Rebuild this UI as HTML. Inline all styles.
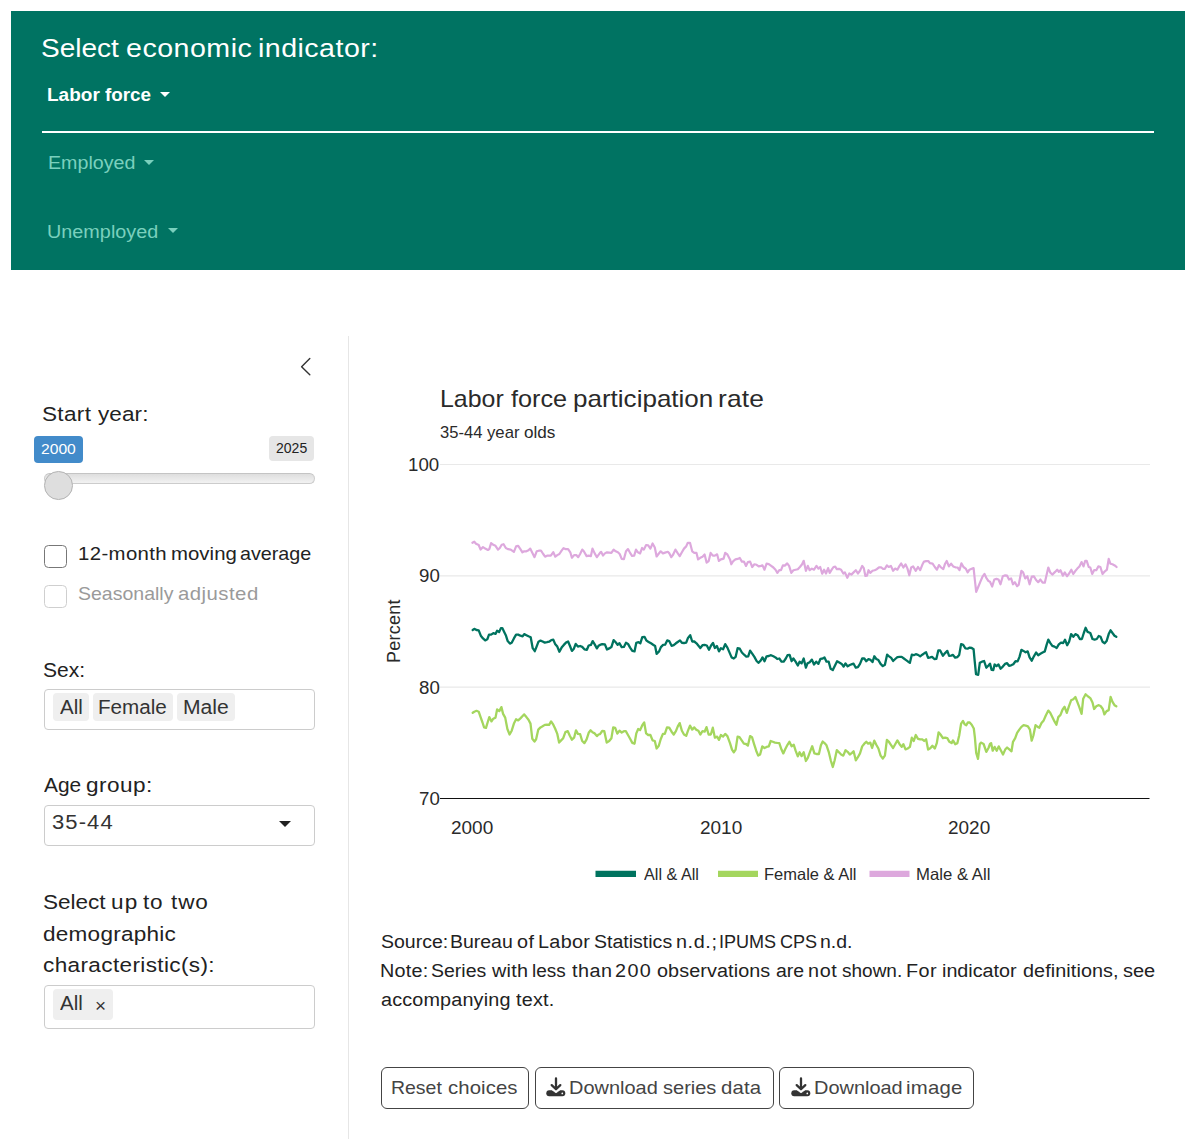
<!DOCTYPE html>
<html lang="en"><head><meta charset="utf-8"><title>Economic indicators</title>
<style>
html,body{margin:0;padding:0;background:#fff}
body{width:1199px;height:1139px;position:relative;overflow:hidden;font-family:'Liberation Sans', sans-serif}
.t{position:absolute;white-space:pre;font-family:'Liberation Sans', sans-serif;transform-origin:0 0}
.abs{position:absolute;box-sizing:border-box}
.hdr{left:11px;top:11px;width:1174px;height:259px;background:#007362}
.rule{left:42px;top:130.5px;width:1112px;height:2px;background:#fff}
.caret{width:0;height:0;border-left:5px solid transparent;border-right:5px solid transparent;border-top:5.5px solid #fff}
.box{border:1px solid #ccc;border-radius:4px;background:#fff}
.chip{background:#efefef;border-radius:4px}
.btn{border:1px solid #444;border-radius:6px;background:#fff}
.cb{width:23px;height:23px;border-radius:4.5px;background:#fff}
</style></head><body>
<div class="abs hdr"></div>
<div class="abs rule"></div>
<div class="abs caret" style="left:160px;top:92px"></div>
<div class="abs caret" style="left:144px;top:160px;border-top-color:#7ad0bd"></div>
<div class="abs caret" style="left:168.3px;top:228.3px;border-top-color:#7ad0bd"></div>

<!-- sidebar -->
<div class="abs" style="left:348px;top:336px;width:1px;height:803px;background:#e6e6e6"></div>
<svg class="abs" style="left:298px;top:355px" width="16" height="24" viewBox="0 0 16 24"><path d="M11.8 3.6 L3.6 11.7 L11.8 19.8" fill="none" stroke="#333" stroke-width="1.4" stroke-linecap="round" stroke-linejoin="round"/></svg>
<div class="abs" style="left:34px;top:436px;width:48.8px;height:26.8px;border-radius:4px;background:#428bca"></div>
<div class="abs" style="left:269.3px;top:436.3px;width:45px;height:25.2px;border-radius:4px;background:#e6e6e6"></div>
<div class="abs" style="left:44px;top:473px;width:271px;height:10.8px;border-radius:6px;border:1px solid #ccc;border-top-color:#c4c4c4;background:linear-gradient(#dedede,#f2f2f2)"></div>
<div class="abs" style="left:44px;top:471px;width:28.8px;height:28.8px;border-radius:50%;border:1px solid #b3b3b3;background:#dedede"></div>
<div class="abs cb" style="left:43.8px;top:544.5px;border:1px solid #777"></div>
<div class="abs cb" style="left:43.8px;top:584.5px;border:1px solid #cfcfcf"></div>
<div class="abs box" style="left:44px;top:689px;width:271px;height:41px"></div>
<div class="abs chip" style="left:53px;top:693px;width:35.8px;height:28.3px"></div>
<div class="abs chip" style="left:93px;top:693px;width:79.5px;height:28.3px"></div>
<div class="abs chip" style="left:177px;top:693px;width:57.5px;height:28.3px"></div>
<div class="abs box" style="left:44px;top:805px;width:271px;height:41px"></div>
<div class="abs caret" style="left:278.7px;top:821.3px;border-left-width:6px;border-right-width:6px;border-top:6px solid #222"></div>
<div class="abs box" style="left:44px;top:985px;width:271px;height:44px"></div>
<div class="abs chip" style="left:53px;top:989px;width:59.8px;height:31px"></div>

<!-- buttons -->
<div class="abs btn" style="left:381px;top:1067px;width:147.5px;height:42px"></div>
<div class="abs btn" style="left:535px;top:1067px;width:238.6px;height:42px"></div>
<div class="abs btn" style="left:779px;top:1067px;width:195px;height:42px"></div>
<svg class="abs" style="left:546px;top:1076px" width="20" height="21" viewBox="0 0 20 21"><use href="#dl"/></svg>
<svg class="abs" style="left:790.6px;top:1076px" width="20" height="21" viewBox="0 0 20 21"><use href="#dl"/></svg>
<svg width="0" height="0" style="position:absolute"><defs><g id="dl"><rect x="0.3" y="14.3" width="19" height="5.9" rx="2.9" fill="#333"/><path d="M6.1 14 L10 16.9 L13.9 14 Z" fill="#fff" stroke="#fff" stroke-width="0.6"/><circle cx="16.3" cy="17.4" r="0.85" fill="#fff"/><path d="M10 2.4 V13 M5.7 9.1 L10 13.3 L14.3 9.1" fill="none" stroke="#333" stroke-width="2.3" stroke-linecap="round" stroke-linejoin="round"/></g></defs></svg>

<svg class="abs" style="left:0;top:0" width="1199" height="1139" viewBox="0 0 1199 1139">
<line x1="440" x2="1150" y1="464.5" y2="464.5" stroke="#e9e9e9" stroke-width="1.1"/>
<line x1="440" x2="1150" y1="575.83" y2="575.83" stroke="#e9e9e9" stroke-width="1.1"/>
<line x1="440" x2="1150" y1="687.17" y2="687.17" stroke="#e9e9e9" stroke-width="1.1"/>
<line x1="440" x2="1149.5" y1="798.5" y2="798.5" stroke="#111" stroke-width="1"/>
<path d="M472.4 542.8 L474.3 541.7 L476.0 543.7 L478.7 545.0 L480.6 549.6 L483.0 547.1 L485.2 548.6 L487.9 550.0 L489.3 549.1 L491.1 543.1 L493.3 544.8 L495.5 545.8 L498.0 549.6 L499.8 548.0 L501.7 544.8 L503.6 544.2 L505.8 548.0 L507.9 549.1 L510.7 549.6 L513.9 551.8 L516.1 546.4 L518.2 545.8 L520.4 549.1 L522.4 552.3 L524.2 551.3 L526.4 551.3 L528.5 550.2 L530.2 548.6 L531.8 551.8 L534.5 557.2 L536.7 551.3 L538.8 550.7 L541.0 550.7 L543.2 554.0 L545.1 556.7 L547.5 555.6 L550.8 555.6 L553.3 552.1 L555.3 556.7 L557.3 555.1 L559.4 554.0 L561.6 550.7 L563.5 548.2 L565.4 549.1 L568.1 549.1 L570.3 552.3 L571.9 557.8 L574.1 555.1 L576.3 555.1 L578.2 557.2 L580.1 554.0 L582.2 549.6 L583.8 551.3 L586.6 556.1 L588.7 555.6 L590.9 556.1 L592.5 548.6 L594.7 553.4 L596.9 557.2 L600.0 552.9 L601.1 551.8 L603.0 555.6 L604.9 553.4 L607.0 552.3 L609.2 552.6 L611.4 552.9 L613.6 549.6 L615.7 551.3 L617.9 552.3 L619.7 554.0 L621.7 558.9 L623.9 559.1 L626.0 551.3 L628.0 549.1 L629.8 552.3 L632.0 555.8 L634.2 555.6 L636.0 549.6 L637.9 552.3 L640.1 553.4 L642.1 548.0 L643.9 549.6 L646.1 545.0 L648.2 545.3 L650.4 548.6 L652.6 543.5 L654.8 547.5 L656.6 556.5 L658.5 554.0 L660.7 551.3 L662.9 553.4 L665.1 552.6 L667.8 551.8 L669.4 553.4 L671.3 557.2 L673.2 554.5 L675.4 549.6 L677.5 552.9 L679.7 556.1 L681.9 552.3 L684.0 548.6 L686.2 546.4 L687.8 542.8 L690.0 542.8 L692.2 551.3 L694.3 552.9 L696.5 552.9 L698.1 559.4 L700.3 557.8 L702.5 556.7 L704.6 554.5 L706.6 562.6 L708.7 561.0 L710.6 552.9 L712.8 555.6 L714.9 555.6 L717.1 554.3 L718.9 561.0 L720.9 559.4 L723.6 558.6 L725.2 552.9 L727.4 554.5 L730.0 559.4 L731.3 564.3 L733.3 561.0 L735.4 559.4 L737.6 558.9 L739.8 558.0 L741.9 561.6 L743.9 561.6 L746.0 565.9 L747.9 562.1 L750.1 561.6 L752.2 567.0 L754.4 564.3 L756.6 564.8 L758.7 566.4 L760.9 565.9 L762.5 565.4 L764.5 569.7 L766.6 563.7 L768.8 564.1 L771.2 565.9 L773.4 567.5 L775.5 569.7 L777.4 572.9 L779.3 570.2 L781.0 570.2 L782.9 565.4 L784.8 565.6 L787.2 563.4 L789.1 565.9 L791.3 572.9 L793.4 570.2 L795.6 569.7 L797.8 569.2 L799.9 567.0 L802.1 564.3 L803.7 560.8 L805.9 570.8 L807.8 565.9 L809.7 570.2 L811.9 568.6 L814.0 569.7 L816.5 565.9 L818.4 568.6 L820.2 567.0 L822.2 573.8 L824.1 569.7 L826.0 573.5 L828.1 568.1 L829.7 572.9 L831.7 569.7 L833.5 567.0 L835.2 566.7 L836.8 569.2 L839.0 568.8 L841.1 569.7 L843.3 573.5 L844.9 572.4 L847.3 577.8 L849.3 573.5 L851.4 574.6 L853.6 572.4 L855.8 570.2 L857.9 573.5 L860.0 570.8 L862.2 565.9 L863.8 568.1 L865.4 576.0 L867.0 575.7 L868.5 570.2 L870.3 572.9 L872.5 570.8 L874.6 570.2 L876.8 569.2 L879.0 567.3 L881.1 567.3 L882.8 568.8 L884.9 568.8 L886.9 565.4 L888.7 567.0 L890.9 565.9 L893.1 570.8 L895.2 568.6 L897.4 569.7 L899.2 566.4 L901.2 563.4 L903.4 567.5 L905.5 564.3 L907.5 568.6 L909.3 575.3 L911.2 567.5 L913.1 566.4 L915.8 570.8 L918.0 567.0 L920.2 570.2 L922.3 564.8 L924.0 561.6 L926.1 561.2 L928.3 561.0 L929.9 563.2 L932.6 563.7 L934.8 567.0 L937.0 569.7 L938.9 565.1 L941.1 567.5 L943.3 569.2 L945.1 563.7 L946.7 561.0 L948.9 566.4 L951.1 563.7 L953.2 566.4 L955.4 567.3 L957.6 567.5 L959.5 570.2 L961.4 563.4 L963.5 567.0 L965.7 568.6 L967.7 572.4 L969.5 569.7 L971.7 568.8 L973.6 568.1 L974.9 580.5 L976.2 591.9 L978.2 587.0 L980.4 581.6 L982.5 576.7 L984.5 574.0 L986.3 577.8 L988.5 581.1 L990.0 581.8 L992.2 586.5 L994.3 579.5 L996.5 578.9 L998.5 579.5 L1000.5 584.3 L1002.8 576.2 L1005.2 575.3 L1007.1 575.7 L1009.0 579.5 L1011.1 578.4 L1013.0 584.3 L1014.9 582.2 L1017.1 586.2 L1018.7 584.9 L1021.4 570.8 L1023.1 572.4 L1025.2 578.4 L1027.4 576.2 L1029.6 584.3 L1031.7 576.7 L1033.9 576.4 L1036.1 580.0 L1038.2 582.2 L1040.4 579.5 L1042.6 582.7 L1044.8 582.7 L1046.4 575.7 L1048.3 567.5 L1050.2 572.4 L1052.3 574.6 L1055.1 571.9 L1057.2 569.7 L1058.8 571.9 L1060.5 570.2 L1062.9 575.7 L1064.8 572.4 L1067.0 576.2 L1069.1 573.5 L1071.3 569.7 L1073.3 574.0 L1075.1 571.3 L1077.3 568.6 L1079.4 566.4 L1081.6 562.1 L1083.5 566.4 L1085.2 560.8 L1086.7 560.8 L1088.7 567.0 L1090.3 567.5 L1092.2 574.0 L1094.1 570.2 L1096.3 570.2 L1098.4 566.4 L1100.4 567.0 L1102.5 574.0 L1104.9 571.3 L1106.9 569.7 L1108.7 558.9 L1110.4 563.7 L1112.5 564.3 L1114.7 565.4 L1116.6 567.0" fill="none" stroke="#dda8dd" stroke-width="2.2" stroke-linejoin="round" stroke-linecap="round"/>
<path d="M472.7 712.8 L474.3 711.7 L476.5 710.8 L478.7 711.7 L480.6 717.1 L482.5 722.5 L484.1 727.4 L486.0 727.9 L487.6 722.5 L489.3 717.1 L491.5 721.4 L493.3 718.7 L495.5 717.6 L497.1 709.5 L499.3 711.1 L501.4 707.1 L503.1 713.9 L505.2 717.6 L507.4 729.0 L509.6 734.5 L511.7 730.7 L513.9 723.6 L516.1 719.3 L518.2 720.4 L520.4 718.4 L522.6 716.0 L524.2 714.4 L526.4 717.1 L528.5 719.8 L530.5 723.6 L532.3 738.8 L534.5 741.5 L536.1 739.3 L538.3 729.6 L540.5 727.4 L542.6 726.3 L544.8 724.9 L547.0 724.7 L549.1 724.9 L551.1 721.4 L553.3 724.7 L555.1 728.5 L557.3 733.9 L559.1 742.6 L561.1 740.4 L563.2 738.2 L565.4 732.1 L567.8 731.2 L569.7 735.5 L571.9 739.7 L574.1 737.7 L576.0 730.3 L577.9 733.9 L580.1 734.2 L582.2 741.0 L584.4 743.1 L586.6 739.3 L588.7 732.8 L590.6 730.3 L592.5 732.3 L594.7 733.4 L596.9 736.1 L598.5 734.5 L600.0 734.1 L602.2 731.0 L604.3 731.2 L606.7 742.6 L609.2 741.0 L611.4 738.2 L613.2 727.4 L615.2 727.9 L617.3 733.6 L619.5 730.7 L621.7 732.5 L623.9 731.2 L625.8 731.2 L628.0 735.0 L630.1 738.8 L632.3 742.9 L634.5 743.7 L636.3 733.4 L638.2 729.0 L640.1 730.1 L642.3 725.2 L644.2 722.5 L646.1 733.4 L648.2 735.0 L650.4 735.0 L652.6 740.4 L654.8 741.0 L656.6 748.5 L658.8 745.8 L660.7 739.3 L662.9 733.9 L664.8 733.9 L667.0 727.4 L669.2 727.7 L671.6 731.7 L673.7 734.5 L675.9 731.2 L677.8 726.3 L679.7 723.1 L681.9 730.7 L684.0 734.5 L686.2 735.8 L688.0 730.7 L690.0 725.6 L692.2 729.6 L694.3 727.4 L696.5 729.9 L698.4 730.7 L700.3 734.5 L702.5 731.2 L704.6 731.7 L706.5 727.1 L708.6 734.5 L710.8 734.5 L712.8 727.7 L714.9 737.7 L717.1 736.6 L719.0 739.9 L720.9 735.0 L723.1 736.6 L725.2 733.9 L727.4 736.1 L730.0 743.1 L732.0 749.6 L733.8 752.3 L735.6 749.6 L737.6 736.6 L739.5 737.2 L741.7 740.4 L743.9 743.7 L746.0 744.0 L747.9 745.5 L750.1 736.1 L752.0 737.2 L754.1 744.2 L756.2 750.7 L758.2 755.6 L760.1 754.5 L762.3 746.4 L764.5 748.0 L766.6 746.9 L768.8 746.4 L770.7 741.0 L772.8 741.8 L775.0 742.6 L777.2 742.9 L779.3 743.1 L781.5 749.6 L783.3 753.4 L785.3 749.1 L787.5 744.8 L789.4 741.8 L791.6 746.2 L793.8 744.8 L795.6 750.7 L797.8 756.4 L799.6 752.3 L801.6 756.1 L803.7 752.3 L805.9 761.0 L807.8 757.8 L810.0 751.8 L812.2 746.2 L814.4 753.4 L816.5 754.0 L818.9 754.0 L820.9 745.3 L822.7 741.5 L824.5 743.1 L826.5 745.3 L828.7 751.8 L830.8 760.5 L832.8 767.0 L834.6 760.5 L836.8 750.2 L839.0 752.3 L841.1 754.5 L843.3 755.6 L845.5 750.2 L847.6 751.8 L849.8 754.5 L852.0 752.9 L853.6 751.3 L855.8 760.3 L857.9 757.2 L860.0 753.4 L862.2 746.4 L864.3 743.7 L866.3 741.8 L868.1 743.7 L870.3 742.6 L872.1 748.0 L874.3 740.7 L876.3 744.8 L878.4 748.5 L880.6 755.6 L882.8 758.5 L884.9 755.6 L886.9 739.9 L888.7 741.5 L890.9 744.8 L893.1 748.0 L895.2 744.2 L897.4 740.4 L899.6 744.2 L901.7 746.9 L903.4 744.2 L905.5 749.4 L907.7 748.5 L909.9 746.9 L911.8 737.7 L913.7 741.0 L915.8 735.0 L918.0 738.8 L920.2 739.3 L922.3 739.3 L924.2 741.0 L926.1 739.3 L928.1 749.6 L930.3 748.3 L932.4 745.8 L934.8 748.5 L936.8 743.1 L938.6 732.3 L940.5 734.5 L942.9 738.2 L945.1 737.7 L947.3 738.2 L949.4 741.8 L951.6 743.1 L953.0 740.4 L955.2 744.2 L957.4 743.1 L959.2 735.5 L961.1 723.6 L963.0 720.9 L964.6 724.2 L966.3 725.2 L967.9 722.3 L969.7 722.5 L971.7 724.7 L973.8 728.5 L974.9 737.7 L976.2 752.9 L978.0 758.8 L979.8 744.2 L980.9 742.6 L983.6 744.0 L986.3 751.8 L988.5 748.0 L990.0 744.0 L991.1 743.1 L992.7 750.7 L994.6 746.9 L996.7 750.7 L998.7 746.4 L1000.8 750.2 L1003.0 754.5 L1005.2 749.6 L1007.1 747.5 L1009.3 749.4 L1011.5 751.3 L1013.0 741.8 L1015.2 738.2 L1017.1 732.8 L1019.3 729.6 L1021.4 726.9 L1023.6 725.2 L1025.8 725.6 L1027.9 726.3 L1029.9 729.6 L1031.7 740.7 L1033.4 735.5 L1035.5 725.2 L1037.7 726.9 L1039.3 727.7 L1041.5 723.1 L1043.7 720.4 L1045.8 715.5 L1048.3 710.6 L1050.2 712.8 L1052.3 717.1 L1054.5 721.4 L1056.4 724.7 L1058.3 717.1 L1060.5 714.9 L1062.6 709.5 L1064.6 706.8 L1066.8 712.8 L1068.9 706.3 L1071.1 700.3 L1073.3 699.2 L1075.4 697.0 L1077.3 701.9 L1079.4 707.3 L1081.6 713.9 L1083.2 698.7 L1085.6 694.3 L1088.1 696.5 L1090.3 698.1 L1092.5 702.5 L1094.1 709.0 L1096.3 706.3 L1098.4 705.2 L1100.6 706.0 L1102.8 709.0 L1104.4 714.4 L1106.6 711.1 L1108.7 710.1 L1110.6 697.0 L1112.5 701.9 L1114.5 705.2 L1116.3 706.3" fill="none" stroke="#a4d65e" stroke-width="2.3" stroke-linejoin="round" stroke-linecap="round"/>
<path d="M472.7 630.0 L474.3 628.9 L476.5 630.0 L478.7 630.3 L480.8 635.7 L483.0 638.4 L485.2 640.4 L487.3 639.3 L489.0 634.6 L491.1 634.6 L493.3 633.2 L495.5 633.9 L497.1 630.8 L499.1 632.1 L500.9 628.1 L502.3 628.1 L504.2 631.9 L505.8 635.2 L507.7 641.1 L509.9 643.6 L511.7 642.8 L513.9 638.4 L516.1 634.6 L518.2 634.6 L520.4 635.7 L522.6 636.3 L524.2 634.1 L526.4 635.2 L528.5 636.3 L530.7 637.3 L532.7 648.2 L534.8 651.2 L536.4 647.1 L538.5 641.7 L540.5 640.6 L542.6 641.5 L544.8 642.6 L547.0 642.2 L549.1 641.7 L551.3 640.1 L553.3 639.7 L555.1 643.9 L557.3 646.6 L559.4 651.7 L561.6 647.6 L563.8 644.9 L566.0 642.6 L568.1 641.5 L570.0 646.0 L571.9 650.9 L573.9 648.7 L575.7 643.9 L577.9 646.6 L580.1 646.0 L582.2 646.9 L584.4 649.3 L586.9 649.8 L588.7 645.5 L590.9 644.9 L592.7 641.1 L594.7 644.4 L596.9 648.4 L598.5 645.8 L600.0 644.9 L602.2 644.1 L604.9 644.4 L607.0 649.5 L609.2 648.4 L611.4 647.1 L613.6 640.1 L615.7 642.2 L617.6 644.7 L619.5 643.3 L621.7 647.1 L623.9 646.9 L626.0 642.8 L628.0 643.9 L630.1 647.6 L632.3 650.9 L634.5 651.4 L636.3 642.8 L638.5 642.2 L640.3 643.3 L642.3 637.1 L644.5 636.8 L646.4 640.6 L648.6 641.9 L651.0 643.3 L653.1 644.7 L655.1 646.0 L656.6 653.8 L659.1 651.4 L660.9 647.1 L663.1 644.9 L665.1 644.7 L667.2 640.4 L669.2 641.1 L671.6 645.8 L673.7 645.2 L675.9 643.3 L678.1 641.7 L680.0 640.4 L681.9 642.8 L684.0 643.0 L686.2 642.6 L688.0 637.9 L690.2 635.2 L692.2 641.5 L694.3 641.5 L696.5 643.3 L698.7 646.0 L700.3 648.0 L702.5 645.2 L704.6 644.9 L706.8 645.5 L709.0 649.8 L711.1 645.5 L713.0 643.0 L714.9 648.0 L716.9 646.0 L719.0 651.4 L720.9 648.2 L723.1 649.3 L725.2 644.1 L727.4 647.6 L730.0 653.6 L731.6 657.4 L733.8 658.5 L735.6 656.9 L737.6 648.2 L739.8 648.7 L741.9 652.5 L744.1 654.7 L746.3 656.6 L748.2 656.3 L750.1 650.6 L752.2 653.6 L754.4 656.9 L756.6 661.0 L758.4 662.8 L760.6 660.7 L762.5 657.4 L764.5 661.2 L766.6 656.3 L768.8 656.0 L771.0 655.2 L773.4 656.3 L775.5 657.4 L777.2 659.0 L779.3 658.5 L781.5 661.7 L783.7 661.7 L785.8 658.5 L787.5 655.2 L789.6 654.9 L791.6 661.2 L793.4 658.5 L795.6 661.7 L797.8 665.5 L799.6 661.7 L801.6 663.4 L803.7 658.5 L805.9 667.7 L807.5 663.4 L809.7 662.3 L811.9 659.6 L814.0 664.5 L816.2 661.7 L818.4 663.9 L820.5 658.8 L822.7 658.5 L824.5 657.4 L826.5 661.7 L828.7 661.7 L830.6 668.8 L832.8 670.1 L835.0 665.5 L837.1 661.2 L839.3 662.5 L841.7 663.9 L843.6 666.6 L845.5 663.4 L847.6 666.4 L849.8 665.0 L852.0 664.2 L853.6 663.7 L855.8 667.7 L857.9 667.2 L860.0 663.9 L862.2 658.5 L864.3 658.5 L866.3 661.2 L868.5 659.2 L870.6 659.9 L872.5 662.1 L874.3 656.3 L876.3 659.0 L878.4 660.1 L880.6 663.9 L882.8 666.1 L884.9 664.7 L887.1 654.7 L889.1 656.3 L891.2 657.9 L893.1 661.0 L895.2 659.0 L897.4 657.1 L899.6 656.9 L901.7 656.9 L903.9 658.5 L906.1 660.1 L908.2 661.7 L909.9 662.8 L911.8 654.7 L913.7 655.2 L915.8 654.2 L918.0 654.9 L920.2 656.3 L922.3 654.7 L924.5 653.1 L926.1 652.3 L928.1 657.9 L930.3 657.4 L932.1 656.9 L934.3 659.0 L936.4 658.8 L938.3 650.4 L940.2 650.4 L942.9 655.8 L945.1 653.1 L947.3 650.9 L949.1 655.8 L951.1 655.6 L953.0 654.9 L955.2 657.7 L957.4 657.1 L959.2 654.9 L961.1 644.1 L963.2 644.9 L965.4 648.4 L967.6 648.7 L969.7 647.6 L971.7 648.0 L973.6 649.3 L974.7 661.2 L976.0 674.2 L978.2 674.8 L979.8 662.8 L982.0 661.7 L984.1 661.0 L986.3 667.7 L988.5 665.5 L990.0 663.6 L991.6 669.9 L993.3 670.1 L994.6 664.5 L996.5 666.1 L998.5 664.5 L1000.6 668.8 L1002.8 666.6 L1005.0 663.9 L1007.1 663.2 L1009.0 665.8 L1011.1 665.3 L1013.3 664.2 L1015.5 661.2 L1017.6 661.4 L1019.5 656.9 L1021.4 649.8 L1023.4 650.9 L1025.6 652.3 L1027.7 651.4 L1029.6 657.4 L1031.7 660.7 L1033.9 656.3 L1036.1 652.5 L1038.2 655.2 L1040.4 653.8 L1042.6 652.5 L1044.8 651.4 L1046.6 644.9 L1048.3 639.7 L1050.2 642.8 L1052.3 645.8 L1054.5 646.6 L1056.7 648.0 L1058.8 644.4 L1061.0 642.6 L1063.2 643.0 L1065.0 639.7 L1067.2 645.2 L1069.1 641.7 L1071.1 634.1 L1073.3 636.8 L1075.4 634.1 L1077.6 635.2 L1079.8 639.0 L1081.9 639.0 L1083.8 633.0 L1085.6 627.8 L1087.6 631.9 L1090.3 633.0 L1092.5 639.0 L1094.6 639.7 L1096.8 639.0 L1098.7 636.0 L1100.6 636.8 L1102.5 641.7 L1104.7 643.3 L1106.6 641.1 L1108.7 634.1 L1110.6 630.3 L1112.5 633.0 L1114.5 635.7 L1116.3 636.8" fill="none" stroke="#00735f" stroke-width="2.3" stroke-linejoin="round" stroke-linecap="round"/>
<line x1="595.5" x2="636" y1="873.9" y2="873.9" stroke="#00735f" stroke-width="6.4"/>
<line x1="718" x2="758" y1="873.9" y2="873.9" stroke="#a4d65e" stroke-width="6.4"/>
<line x1="869.5" x2="909.5" y1="873.9" y2="873.9" stroke="#dda8dd" stroke-width="6.4"/>
<text x="400" y="631.2" transform="rotate(-90 400 631.2)" text-anchor="middle" font-family="'Liberation Sans', sans-serif" font-size="18" letter-spacing="0.25" fill="#2a2a2a">Percent</text>
</svg>
<span class="t" style="left:40.89px;top:35.00px;font-size:26px;line-height:26px;color:#fff;font-weight:400;letter-spacing:0.000px;transform:scaleX(1.0779)">Select</span>
<span class="t" style="left:126.04px;top:35.00px;font-size:26px;line-height:26px;color:#fff;font-weight:400;letter-spacing:0.437px;transform:scaleX(1.1000)">economic</span>
<span class="t" style="left:257.71px;top:35.00px;font-size:26px;line-height:26px;color:#fff;font-weight:400;letter-spacing:0.418px;transform:scaleX(1.1000)">indicator:</span>
<span class="t" style="left:47.33px;top:86.00px;font-size:18px;line-height:18px;color:#fff;font-weight:700;letter-spacing:0.000px;transform:scaleX(1.0564)">Labor</span>
<span class="t" style="left:104.78px;top:86.00px;font-size:18px;line-height:18px;color:#fff;font-weight:700;letter-spacing:0.000px;transform:scaleX(1.0471)">force</span>
<span class="t" style="left:47.94px;top:154.00px;font-size:18px;line-height:18px;color:#7ad0bd;font-weight:400;letter-spacing:0.000px;transform:scaleX(1.0913)">Employed</span>
<span class="t" style="left:47.19px;top:223.00px;font-size:18px;line-height:18px;color:#7ad0bd;font-weight:400;letter-spacing:0.010px;transform:scaleX(1.1000)">Unemployed</span>
<span class="t" style="left:42.24px;top:404.00px;font-size:20.5px;line-height:20.5px;color:#222;font-weight:400;letter-spacing:0.289px;transform:scaleX(1.1000)">Start</span>
<span class="t" style="left:98.33px;top:404.00px;font-size:20.5px;line-height:20.5px;color:#222;font-weight:400;letter-spacing:0.065px;transform:scaleX(1.1000)">year:</span>
<span class="t" style="left:41.46px;top:441.00px;font-size:15px;line-height:15px;color:#fff;font-weight:400;letter-spacing:0.000px;transform:scaleX(1.0432)">2000</span>
<span class="t" style="left:276.48px;top:441.00px;font-size:14px;line-height:14px;color:#222;font-weight:400;letter-spacing:0.000px;transform:scaleX(1.0011)">2025</span>
<span class="t" style="left:77.98px;top:545.00px;font-size:18.5px;line-height:18.5px;color:#222;font-weight:400;letter-spacing:0.352px;transform:scaleX(1.1000)">12-month</span>
<span class="t" style="left:170.54px;top:545.00px;font-size:18.5px;line-height:18.5px;color:#222;font-weight:400;letter-spacing:0.037px;transform:scaleX(1.1000)">moving</span>
<span class="t" style="left:240.29px;top:545.00px;font-size:18.5px;line-height:18.5px;color:#222;font-weight:400;letter-spacing:0.000px;transform:scaleX(1.0660)">average</span>
<span class="t" style="left:78.04px;top:585.00px;font-size:18.5px;line-height:18.5px;color:#9a9a9a;font-weight:400;letter-spacing:0.000px;transform:scaleX(1.0541)">Seasonally</span>
<span class="t" style="left:177.95px;top:585.00px;font-size:18.5px;line-height:18.5px;color:#9a9a9a;font-weight:400;letter-spacing:0.424px;transform:scaleX(1.1000)">adjusted</span>
<span class="t" style="left:43.24px;top:660.00px;font-size:20.5px;line-height:20.5px;color:#222;font-weight:400;letter-spacing:0.000px;transform:scaleX(1.0265)">Sex:</span>
<span class="t" style="left:59.94px;top:698.00px;font-size:19.5px;line-height:19.5px;color:#333;font-weight:400;letter-spacing:0.000px;transform:scaleX(1.0496)">All</span>
<span class="t" style="left:97.84px;top:698.00px;font-size:19.5px;line-height:19.5px;color:#333;font-weight:400;letter-spacing:0.000px;transform:scaleX(1.0584)">Female</span>
<span class="t" style="left:182.67px;top:698.00px;font-size:19.5px;line-height:19.5px;color:#333;font-weight:400;letter-spacing:0.000px;transform:scaleX(1.0832)">Male</span>
<span class="t" style="left:43.90px;top:775.00px;font-size:20.5px;line-height:20.5px;color:#222;font-weight:400;letter-spacing:0.000px;transform:scaleX(1.0181)">Age</span>
<span class="t" style="left:85.69px;top:775.00px;font-size:20.5px;line-height:20.5px;color:#222;font-weight:400;letter-spacing:0.424px;transform:scaleX(1.1000)">group:</span>
<span class="t" style="left:52.31px;top:812.00px;font-size:20px;line-height:20px;color:#333;font-weight:400;letter-spacing:1.005px;transform:scaleX(1.1000)">35-44</span>
<span class="t" style="left:43.06px;top:892.00px;font-size:20.5px;line-height:20.5px;color:#222;font-weight:400;letter-spacing:-0.020px;transform:scaleX(1.1000)">Select</span>
<span class="t" style="left:110.79px;top:892.00px;font-size:20.5px;line-height:20.5px;color:#222;font-weight:400;letter-spacing:1.034px;transform:scaleX(1.1000)">up</span>
<span class="t" style="left:143.27px;top:892.00px;font-size:20.5px;line-height:20.5px;color:#222;font-weight:400;letter-spacing:0.615px;transform:scaleX(1.1000)">to</span>
<span class="t" style="left:170.94px;top:892.00px;font-size:20.5px;line-height:20.5px;color:#222;font-weight:400;letter-spacing:0.822px;transform:scaleX(1.1000)">two</span>
<span class="t" style="left:43.18px;top:924.00px;font-size:20.5px;line-height:20.5px;color:#222;font-weight:400;letter-spacing:0.220px;transform:scaleX(1.1000)">demographic</span>
<span class="t" style="left:43.32px;top:955.00px;font-size:20.5px;line-height:20.5px;color:#222;font-weight:400;letter-spacing:0.334px;transform:scaleX(1.1000)">characteristic(s):</span>
<span class="t" style="left:59.94px;top:994.00px;font-size:19.5px;line-height:19.5px;color:#333;font-weight:400;letter-spacing:0.000px;transform:scaleX(1.0496)">All</span>
<span class="t" style="left:95.06px;top:997.00px;font-size:18px;line-height:18px;color:#333;font-weight:400;letter-spacing:0.000px;transform:scaleX(1.0529)">×</span>
<span class="t" style="left:381.22px;top:933.00px;font-size:18px;line-height:18px;color:#222;font-weight:400;letter-spacing:0.000px;transform:scaleX(1.0835)">Source:</span>
<span class="t" style="left:449.84px;top:933.00px;font-size:18px;line-height:18px;color:#222;font-weight:400;letter-spacing:0.000px;transform:scaleX(1.0802)">Bureau</span>
<span class="t" style="left:516.80px;top:933.00px;font-size:18px;line-height:18px;color:#222;font-weight:400;letter-spacing:0.532px;transform:scaleX(1.1000)">of</span>
<span class="t" style="left:537.64px;top:933.00px;font-size:18px;line-height:18px;color:#222;font-weight:400;letter-spacing:0.298px;transform:scaleX(1.1000)">Labor</span>
<span class="t" style="left:594.42px;top:933.00px;font-size:18px;line-height:18px;color:#222;font-weight:400;letter-spacing:0.000px;transform:scaleX(1.0852)">Statistics</span>
<span class="t" style="left:675.61px;top:933.00px;font-size:18px;line-height:18px;color:#222;font-weight:400;letter-spacing:0.554px;transform:scaleX(1.1000)">n.d.;</span>
<span class="t" style="left:718.90px;top:933.00px;font-size:18px;line-height:18px;color:#222;font-weight:400;letter-spacing:0.000px;transform:scaleX(1.0022)">IPUMS</span>
<span class="t" style="left:779.89px;top:933.00px;font-size:18px;line-height:18px;color:#222;font-weight:400;letter-spacing:0.000px;transform:scaleX(1.0042)">CPS</span>
<span class="t" style="left:820.16px;top:933.00px;font-size:18px;line-height:18px;color:#222;font-weight:400;letter-spacing:0.000px;transform:scaleX(1.0805)">n.d.</span>
<span class="t" style="left:380.30px;top:962.00px;font-size:18px;line-height:18px;color:#222;font-weight:400;letter-spacing:0.195px;transform:scaleX(1.1000)">Note:</span>
<span class="t" style="left:431.28px;top:962.00px;font-size:18px;line-height:18px;color:#222;font-weight:400;letter-spacing:0.000px;transform:scaleX(1.0828)">Series</span>
<span class="t" style="left:492.08px;top:962.00px;font-size:18px;line-height:18px;color:#222;font-weight:400;letter-spacing:0.260px;transform:scaleX(1.1000)">with</span>
<span class="t" style="left:531.85px;top:962.00px;font-size:18px;line-height:18px;color:#222;font-weight:400;letter-spacing:0.000px;transform:scaleX(1.0523)">less</span>
<span class="t" style="left:571.86px;top:962.00px;font-size:18px;line-height:18px;color:#222;font-weight:400;letter-spacing:0.475px;transform:scaleX(1.1000)">than</span>
<span class="t" style="left:615.43px;top:962.00px;font-size:18px;line-height:18px;color:#222;font-weight:400;letter-spacing:1.247px;transform:scaleX(1.1000)">200</span>
<span class="t" style="left:656.65px;top:962.00px;font-size:18px;line-height:18px;color:#222;font-weight:400;letter-spacing:0.081px;transform:scaleX(1.1000)">observations</span>
<span class="t" style="left:775.77px;top:962.00px;font-size:18px;line-height:18px;color:#222;font-weight:400;letter-spacing:0.000px;transform:scaleX(1.0798)">are</span>
<span class="t" style="left:808.45px;top:962.00px;font-size:18px;line-height:18px;color:#222;font-weight:400;letter-spacing:0.563px;transform:scaleX(1.1000)">not</span>
<span class="t" style="left:842.45px;top:962.00px;font-size:18px;line-height:18px;color:#222;font-weight:400;letter-spacing:0.000px;transform:scaleX(1.0557)">shown.</span>
<span class="t" style="left:905.94px;top:962.00px;font-size:18px;line-height:18px;color:#222;font-weight:400;letter-spacing:0.434px;transform:scaleX(1.1000)">For</span>
<span class="t" style="left:941.60px;top:962.00px;font-size:18px;line-height:18px;color:#222;font-weight:400;letter-spacing:0.000px;transform:scaleX(1.0965)">indicator</span>
<span class="t" style="left:1022.77px;top:962.00px;font-size:18px;line-height:18px;color:#222;font-weight:400;letter-spacing:0.077px;transform:scaleX(1.1000)">definitions,</span>
<span class="t" style="left:1123.44px;top:962.00px;font-size:18px;line-height:18px;color:#222;font-weight:400;letter-spacing:0.000px;transform:scaleX(1.1110)">see</span>
<span class="t" style="left:380.85px;top:991.00px;font-size:18px;line-height:18px;color:#222;font-weight:400;letter-spacing:0.144px;transform:scaleX(1.1000)">accompanying</span>
<span class="t" style="left:515.81px;top:991.00px;font-size:18px;line-height:18px;color:#222;font-weight:400;letter-spacing:0.168px;transform:scaleX(1.1000)">text.</span>
<span class="t" style="left:391.07px;top:1079.00px;font-size:18.5px;line-height:18.5px;color:#444;font-weight:400;letter-spacing:0.000px;transform:scaleX(1.0517)">Reset</span>
<span class="t" style="left:448.16px;top:1079.00px;font-size:18.5px;line-height:18.5px;color:#444;font-weight:400;letter-spacing:0.082px;transform:scaleX(1.1000)">choices</span>
<span class="t" style="left:569.43px;top:1079.00px;font-size:18.5px;line-height:18.5px;color:#444;font-weight:400;letter-spacing:0.000px;transform:scaleX(1.0784)">Download</span>
<span class="t" style="left:663.02px;top:1079.00px;font-size:18.5px;line-height:18.5px;color:#444;font-weight:400;letter-spacing:0.000px;transform:scaleX(1.0817)">series</span>
<span class="t" style="left:720.95px;top:1079.00px;font-size:18.5px;line-height:18.5px;color:#444;font-weight:400;letter-spacing:0.123px;transform:scaleX(1.1000)">data</span>
<span class="t" style="left:813.64px;top:1079.00px;font-size:18.5px;line-height:18.5px;color:#444;font-weight:400;letter-spacing:0.000px;transform:scaleX(1.0780)">Download</span>
<span class="t" style="left:906.00px;top:1079.00px;font-size:18.5px;line-height:18.5px;color:#444;font-weight:400;letter-spacing:0.210px;transform:scaleX(1.1000)">image</span>
<span class="t" style="left:439.72px;top:387.00px;font-size:24px;line-height:24px;color:#2a2a2a;font-weight:400;letter-spacing:0.000px;transform:scaleX(1.0374)">Labor</span>
<span class="t" style="left:511.39px;top:387.00px;font-size:24px;line-height:24px;color:#2a2a2a;font-weight:400;letter-spacing:0.000px;transform:scaleX(1.0504)">force</span>
<span class="t" style="left:573.36px;top:387.00px;font-size:24px;line-height:24px;color:#2a2a2a;font-weight:400;letter-spacing:0.000px;transform:scaleX(1.0843)">participation</span>
<span class="t" style="left:717.89px;top:387.00px;font-size:24px;line-height:24px;color:#2a2a2a;font-weight:400;letter-spacing:0.125px;transform:scaleX(1.1000)">rate</span>
<span class="t" style="left:440.49px;top:424.00px;font-size:17px;line-height:17px;color:#2a2a2a;font-weight:400;letter-spacing:0.000px;transform:scaleX(0.9737)">35-44</span>
<span class="t" style="left:486.99px;top:424.00px;font-size:17px;line-height:17px;color:#2a2a2a;font-weight:400;letter-spacing:0.000px;transform:scaleX(0.9834)">year</span>
<span class="t" style="left:523.62px;top:424.00px;font-size:17px;line-height:17px;color:#2a2a2a;font-weight:400;letter-spacing:0.000px;transform:scaleX(1.0080)">olds</span>
<span class="t" style="left:408.23px;top:456.00px;font-size:18px;line-height:18px;color:#2a2a2a;font-weight:400;letter-spacing:0.000px;transform:scaleX(1.0374)">100</span>
<span class="t" style="left:419.00px;top:567.00px;font-size:18px;line-height:18px;color:#2a2a2a;font-weight:400;letter-spacing:0.000px;transform:scaleX(1.0374)">90</span>
<span class="t" style="left:419.00px;top:679.00px;font-size:18px;line-height:18px;color:#2a2a2a;font-weight:400;letter-spacing:0.000px;transform:scaleX(1.0374)">80</span>
<span class="t" style="left:419.00px;top:790.00px;font-size:18px;line-height:18px;color:#2a2a2a;font-weight:400;letter-spacing:0.000px;transform:scaleX(1.0374)">70</span>
<span class="t" style="left:450.60px;top:819.00px;font-size:18px;line-height:18px;color:#2a2a2a;font-weight:400;letter-spacing:0.000px;transform:scaleX(1.0535)">2000</span>
<span class="t" style="left:700.32px;top:819.00px;font-size:18px;line-height:18px;color:#2a2a2a;font-weight:400;letter-spacing:0.000px;transform:scaleX(1.0534)">2010</span>
<span class="t" style="left:948.04px;top:819.00px;font-size:18px;line-height:18px;color:#2a2a2a;font-weight:400;letter-spacing:0.000px;transform:scaleX(1.0536)">2020</span>
<span class="t" style="left:643.69px;top:866.00px;font-size:16.5px;line-height:16.5px;color:#2a2a2a;font-weight:400;letter-spacing:0.000px;transform:scaleX(0.9819)">All &amp; All</span>
<span class="t" style="left:764.39px;top:866.00px;font-size:16.5px;line-height:16.5px;color:#2a2a2a;font-weight:400;letter-spacing:0.000px;transform:scaleX(0.9991)">Female &amp; All</span>
<span class="t" style="left:916.00px;top:866.00px;font-size:16.5px;line-height:16.5px;color:#2a2a2a;font-weight:400;letter-spacing:0.000px;transform:scaleX(1.0141)">Male &amp; All</span>
</body></html>
